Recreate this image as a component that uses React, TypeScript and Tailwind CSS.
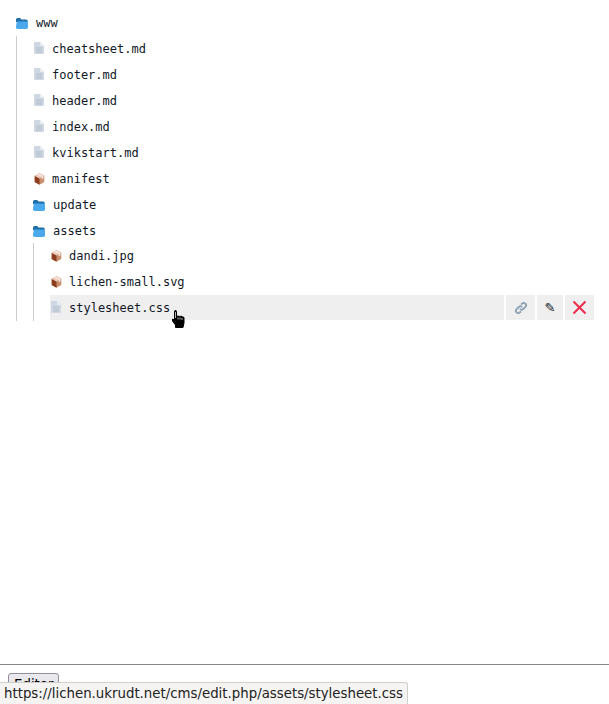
const mono = "font-['DejaVu_Sans_Mono',monospace] text-[12px] leading-[26px] text-[#111827]";

const FolderIcon = () => (
  <svg width="12" height="11" viewBox="0 0 12 11" className="shrink-0">
    <path d="M0 1.5a1.5 1.5 0 0 1 1.5-1.5h2.7l1.3 1.4h4.7a1.5 1.5 0 0 1 1.5 1.5v1h-11.7v5h-0.5z" fill="#1f6fa8" />
    <path d="M0.6 4.6q0.2-1 1.2-1h9a1.2 1.2 0 0 1 1.2 1.2v4.4a1.8 1.8 0 0 1-1.8 1.8h-8.4a1.8 1.8 0 0 1-1.8-1.8z" fill="#4aa8ec" />
  </svg>
);

const FileIcon = () => (
  <svg width="10" height="12" viewBox="0 0 10 12" className="mb-[2px] ml-[1px] shrink-0">
    <path d="M0 1a1 1 0 0 1 1-1h5l4 4v7a1 1 0 0 1-1 1h-8a1 1 0 0 1-1-1z" fill="#cfd8e2" />
    <path d="M6 0l4 4h-4z" fill="#e8edf2" />
    <path d="M2 5.5h6v1h-6zM2 7.5h6v1h-6zM2 9.5h6v1h-6z" fill="#b0bdcb" />
  </svg>
);

const PackageIcon = () => (
  <svg width="11" height="12" viewBox="0 0 11 12" className="ml-[1px] shrink-0">
    <path d="M5.5 0.3l4.8 2.4v6.4l-4.8 2.6-4.8-2.6v-6.4z" fill="#c98e6d" />
    <path d="M0.7 2.9l4.8 2.6v6.2l-4.8-2.6z" fill="#8c3d1d" />
    <path d="M5.5 0.3l4.8 2.5-4.8 2.7-4.8-2.7z" fill="#ecc9ba" />
    <path d="M2.8 1.3l5 2.6v2.4l1.6-0.8v-2.4l-5-2.6z" fill="#f8e9e2" />
  </svg>
);

type RowProps = { name: string; icon: 'file' | 'pkg' | 'folder'; hovered?: boolean };

const Row = ({ name, icon, hovered }: RowProps) => (
  <div className={`flex items-center ${hovered ? 'h-[25px] bg-[#efefef]' : 'h-[26px]'}`}>
    <span className="flex w-[19px] justify-start">
      {icon === 'file' && <FileIcon />}
      {icon === 'pkg' && <PackageIcon />}
      {icon === 'folder' && <FolderIcon />}
    </span>
    <span className={`${mono} ${icon === 'folder' ? 'ml-[1px]' : ''}`}>{name}</span>
    {hovered && (
      <div className="ml-auto flex h-full gap-[2px] bg-white pl-[2px]">
        <button className="flex h-full w-[29px] items-center justify-center bg-[#efefef]">
          <svg width="14" height="14" viewBox="0 0 16 16" fill="none" stroke="#8fa3b5" strokeWidth="2.2">
            <path d="M6.8 9.2a2.6 2.6 0 0 0 3.7 0l2.5-2.5a2.6 2.6 0 0 0-3.7-3.7l-1.2 1.2" />
            <path d="M9.2 6.8a2.6 2.6 0 0 0-3.7 0l-2.5 2.5a2.6 2.6 0 0 0 3.7 3.7l1.2-1.2" />
          </svg>
        </button>
        <button className="flex h-full w-[26px] items-center justify-center bg-[#efefef] font-['DejaVu_Sans',sans-serif] text-[13px] text-[#111827]">
          ✎
        </button>
        <button className="flex h-full w-[29px] items-center justify-center bg-[#efefef]">
          <svg width="15" height="15" viewBox="0 0 15 15" stroke="#ee2a4d" strokeWidth="2">
            <path d="M1.5 1.5l12 12M13.5 1.5l-12 12" />
          </svg>
        </button>
      </div>
    )}
  </div>
);

const App = () => {
  return (
    <div className="relative flex h-screen flex-col overflow-hidden bg-white">
      <div className="h-[663px] shrink-0 pt-[10px] pr-[15px] pl-[16px]">
        <Row name="www" icon="folder" />
        <div className="border-l border-[#cccccc] pl-[16px]">
          <Row name="cheatsheet.md" icon="file" />
          <Row name="footer.md" icon="file" />
          <Row name="header.md" icon="file" />
          <Row name="index.md" icon="file" />
          <Row name="kvikstart.md" icon="file" />
          <Row name="manifest" icon="pkg" />
          <Row name="update" icon="folder" />
          <Row name="assets" icon="folder" />
          <div className="-mt-[1px] border-l border-[#cccccc] pb-[1px] pl-[16px]">
            <Row name="dandi.jpg" icon="pkg" />
            <Row name="lichen-small.svg" icon="pkg" />
            <Row name="stylesheet.css" icon="file" hovered />
          </div>
        </div>
      </div>
      <hr className="mt-[1px] border-t border-[#888888]" />
      <div className="flex items-start pt-[8px] pl-[8px]">
        <button className="rounded-[3px] border border-[#8f8f9d] bg-[#e9e9ed] px-[5px] py-[1px] font-['DejaVu_Sans',sans-serif] text-[13.33px] text-black">
          Editor
        </button>
      </div>
      <div className="absolute bottom-0 left-0 flex h-[22px] items-center rounded-tr-[3px] border-t border-r border-[#d0cfcc] bg-[#f5f4f2] px-[4px] font-['DejaVu_Sans',sans-serif] text-[13.33px] text-[#222222]">
        https://lichen.ukrudt.net/cms/edit.php/assets/stylesheet.css
      </div>
      <svg width="15" height="18" viewBox="0 0 15 18" className="absolute top-[310px] left-[171px]">
        <path d="M3.5 1.5a1 1 0 0 1 2 0v5l1.5-0.5 1.5 0.5 1.5-0.3 1.5 0.6 1.5 0.7v5.5l-1 4.5h-7.5v-2.5l-3-4v-2l2 1z" fill="#000" stroke="#000" strokeWidth="1" />
        <path d="M4.5 2v6M7 7.5v2M9 7.5v2M11 8v2" stroke="#fff" strokeWidth="0.7" />
      </svg>
    </div>
  );
};

export default App;
